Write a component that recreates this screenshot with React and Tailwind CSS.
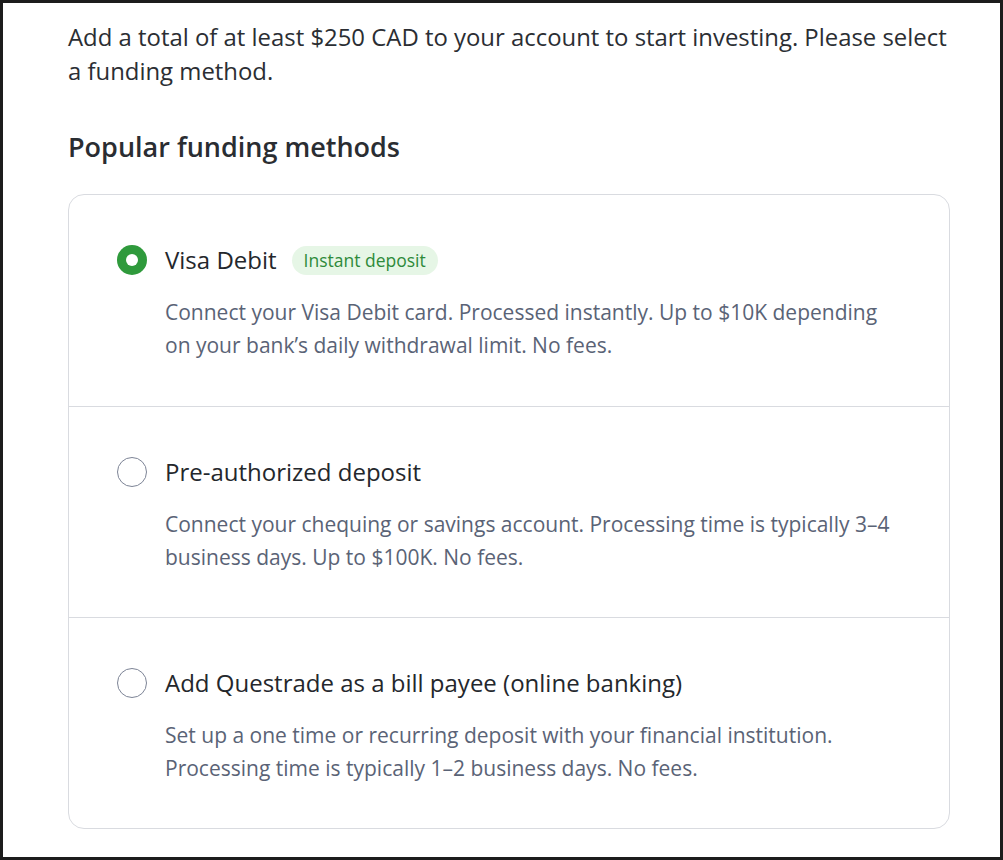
import React, { useState } from 'react';

const methods = [
  {
    id: 'visa',
    title: 'Visa Debit',
    badge: 'Instant deposit',
    description:
      'Connect your Visa Debit card. Processed instantly. Up to $10K depending on your bank’s daily withdrawal limit. No fees.',
  },
  {
    id: 'pad',
    title: 'Pre-authorized deposit',
    description:
      'Connect your chequing or savings account. Processing time is typically 3–4 business days. Up to $100K. No fees.',
  },
  {
    id: 'bill',
    title: 'Add Questrade as a bill payee (online banking)',
    description:
      'Set up a one time or recurring deposit with your financial institution. Processing time is typically 1–2 business days. No fees.',
  },
];

const Radio = ({ checked }) =>
  checked ? (
    <span className="w-[30px] h-[30px] rounded-full bg-[#2f9a3c] flex items-center justify-center shrink-0">
      <span className="w-[12px] h-[12px] rounded-full bg-white" />
    </span>
  ) : (
    <span className="w-[30px] h-[30px] rounded-full border-[1.5px] border-[#7d8496] bg-white shrink-0" />
  );

const App = () => {
  const [selected, setSelected] = useState('visa');

  return (
    <div
      className="w-[1003px] h-[860px] bg-white border-[3px] border-[#1c1c1c] pl-[65px] pr-[50px] pt-[17px] text-[#2b2e33]"
      style={{ fontFamily: '"Open Sans", "Noto Sans", sans-serif' }}
    >
      <p className="text-[23.9px] leading-[34px] text-[#2b2e33]">
        Add a total of at least $250 CAD to your account to start investing. Please select a funding method.
      </p>

      <h2 className="mt-[43px] text-[27px] leading-[32px] font-semibold text-[#2a2d32]">
        Popular funding methods
      </h2>

      <div className="mt-[31px] w-[882px] border border-[#d9dbe0] rounded-[16px] overflow-hidden">
        {methods.map((m, i) => (
          <div
            key={m.id}
            onClick={() => setSelected(m.id)}
            className={`h-[211px] pl-[48px] pr-[47px] pt-[50px] cursor-pointer ${
              i > 0 ? 'border-t border-[#d9dbe0]' : ''
            }`}
          >
            <div className="flex items-center h-[30px]">
              <Radio checked={selected === m.id} />
              <span className="ml-[18px] text-[24px] leading-[30px] text-[#24272c]">{m.title}</span>
              {m.badge && (
                <span className="ml-[15px] h-[29px] px-[12px] rounded-full bg-[#e6f6e6] text-[#2e8a3a] text-[17.5px] leading-[29px]">
                  {m.badge}
                </span>
              )}
            </div>
            <p className="mt-[21px] ml-[48px] text-[21px] leading-[33px] text-[#5a6376]">
              {m.description}
            </p>
          </div>
        ))}
      </div>
    </div>
  );
};

export default App;
